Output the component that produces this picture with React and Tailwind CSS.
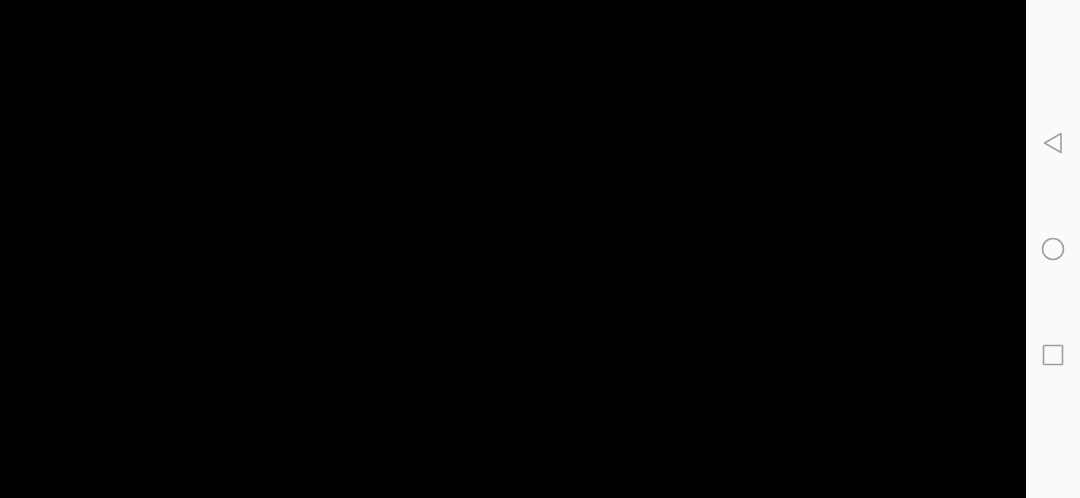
export default function App() {
    return (
        <div className="flex w-[1080px] h-[498px] overflow-hidden">
            <div className="flex-1 bg-black" />
            <div className="w-[54px] bg-[#fafafa] flex flex-col items-center justify-center gap-[82px] text-[#9e9e9e]">
                <svg width="24" height="24" viewBox="0 0 24 24" fill="none" stroke="currentColor" strokeWidth="1.6" strokeLinejoin="round">
                    <path d="M20 2.5 L3.5 12 L20 21.5 Z" />
                </svg>
                <svg width="24" height="24" viewBox="0 0 24 24" fill="none" stroke="currentColor" strokeWidth="1.6">
                    <circle cx="12" cy="12" r="10.5" />
                </svg>
                <svg width="24" height="24" viewBox="0 0 24 24" fill="none" stroke="currentColor" strokeWidth="1.6" strokeLinejoin="round">
                    <rect x="2.5" y="2.5" width="19" height="19" rx="0.8" />
                </svg>
            </div>
        </div>
    )
}
